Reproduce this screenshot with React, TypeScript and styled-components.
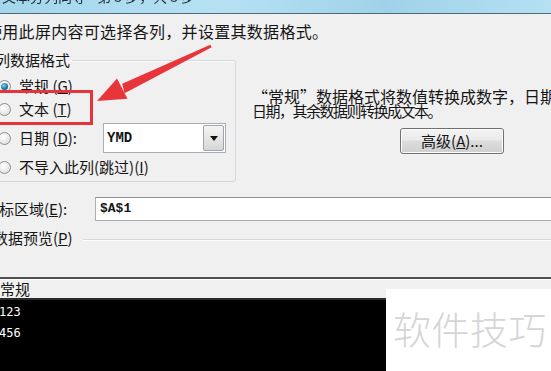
import React from 'react';
import styled, { createGlobalStyle } from 'styled-components';

const GlobalStyle = createGlobalStyle`
  html, body {
    margin: 0;
    padding: 0;
    background: #f0f0f0;
    overflow: hidden;
  }
`;

const App: React.FC = () => {
  const options = [
    { label: '常规', key: 'G', checked: true, height: 20, gap: 0 },
    { label: '文本', key: 'T', checked: false, height: 20, gap: 3 },
  ];

  return (
    <Page>
      <GlobalStyle />
      <TitleBar>
        <TitleText>文本分列向导 - 第 3 步，共 3 步</TitleText>
      </TitleBar>
      <Body>
        <Intro>使用此屏内容可选择各列，并设置其数据格式。</Intro>
        <Middle>
          <GroupBox>
            <Legend>列数据格式</Legend>
            {options.map((item) => (
              <OptionRow key={item.key} $height={item.height} $gap={item.gap}>
                <Radio $checked={item.checked} />
                <OptionLabel>
                  {item.label} (<Key>{item.key}</Key>)
                </OptionLabel>
              </OptionRow>
            ))}
            <OptionRow $height={30} $gap={4}>
              <Radio $checked={false} />
              <OptionLabel>
                日期 (<Key>D</Key>):
              </OptionLabel>
              <Combo>
                <ComboText>YMD</ComboText>
                <ComboButton>
                  <Caret />
                </ComboButton>
              </Combo>
            </OptionRow>
            <OptionRow $height={20} $gap={4}>
              <Radio $checked={false} />
              <OptionLabel>
                不导入此列(跳过)(<Key>I</Key>)
              </OptionLabel>
            </OptionRow>
          </GroupBox>
          <Description>
            <DescLine>“常规”数据格式将数值转换成数字，日期值会转换成</DescLine>
            <DescLineTight>日期，其余数据则转换成文本。</DescLineTight>
            <WinButton>
              高级(<Key>A</Key>)...
            </WinButton>
          </Description>
        </Middle>
        <TargetRow>
          <TargetLabel>
            目标区域(<Key>E</Key>):
          </TargetLabel>
          <TargetInput>$A$1</TargetInput>
        </TargetRow>
        <PreviewLabelRow>
          <PreviewLabel>
            数据预览(<Key>P</Key>)
          </PreviewLabel>
          <EtchedLine />
        </PreviewLabelRow>
        <PreviewPane>
          <PreviewHeader>
            <HeaderCell>常规</HeaderCell>
          </PreviewHeader>
          <PreviewGrid>
            <GridRow>123</GridRow>
            <GridRow>456</GridRow>
          </PreviewGrid>
        </PreviewPane>
      </Body>

      <Highlight />
      <Arrow width="551" height="371" viewBox="0 0 551 371">
        <polygon points="122.2,83.8 210.3,44.8 211.7,47.2 124.6,93.2" fill="#e8353a" />
        <polygon points="97,101 117,78.5 127.5,98.8" fill="#e8353a" />
      </Arrow>
      <Watermark>软件技巧</Watermark>
    </Page>
  );
};

const Page = styled.div`
  position: relative;
  width: 551px;
  height: 371px;
  overflow: hidden;
  background: #f0f0f0;
  font-family: "Noto Sans CJK SC", "Noto Sans", sans-serif;
  color: #151515;
`;

const TitleBar = styled.div`
  height: 13px;
  display: flex;
  align-items: flex-end;
  overflow: hidden;
  background: linear-gradient(to right, #a3d6ec 0%, #b6e1f3 40%, #9fd2e9 70%, #b5e0f2 100%);
  border-bottom: 1px solid #50697a;
`;

const TitleText = styled.div`
  margin: 0 0 10px 2px;
  font-size: 14px;
  line-height: 14px;
  white-space: nowrap;
  color: #1d2a33;
  filter: blur(0.7px);
`;

const Body = styled.div`
  margin-left: -16px;
  width: 620px;
  display: flex;
  flex-direction: column;
`;

const Intro = styled.div`
  margin-top: 8px;
  padding-left: 2px;
  height: 18px;
  font-size: 16px;
  line-height: 18px;
  letter-spacing: 0.3px;
  white-space: nowrap;
`;

const Middle = styled.div`
  display: flex;
  align-items: flex-start;
  margin-top: 11px;
`;

const GroupBox = styled.fieldset`
  flex: none;
  box-sizing: border-box;
  width: 244px;
  min-width: 0;
  margin: 0 0 0 8px;
  padding: 7px 9px 4px 0;
  border: 1px solid #d5d9dd;
  border-radius: 3px;
  box-shadow: inset 1px 1px 0 #fff;
`;

const Legend = styled.legend`
  margin-left: 2px;
  padding: 0 2px 0 0;
  font-size: 15px;
  line-height: 18px;
`;

const OptionRow = styled.div<{ $height: number; $gap: number }>`
  display: flex;
  align-items: center;
  gap: 8px;
  height: ${({ $height }) => $height}px;
  margin-top: ${({ $gap }) => $gap}px;
`;

const Radio = styled.span<{ $checked: boolean }>`
  flex: none;
  box-sizing: border-box;
  width: 13px;
  height: 13px;
  margin-left: 5px;
  border-radius: 50%;
  border: 1px solid #8c8f92;
  background: radial-gradient(circle at 40% 35%, #ffffff 0%, #e9e9e9 55%, #d2d4d6 100%);
  display: flex;
  align-items: center;
  justify-content: center;

  &::after {
    content: '';
    width: 7px;
    height: 7px;
    border-radius: 50%;
    background: ${({ $checked }) =>
      $checked ? 'radial-gradient(circle at 40% 35%, #7fd4f7 0%, #1f78a8 55%, #123f5c 100%)' : 'transparent'};
  }
`;

const OptionLabel = styled.span`
  font-size: 15px;
  line-height: 18px;
  white-space: nowrap;
`;

const Key = styled.span`
  text-decoration: underline;
`;

const Combo = styled.div`
  flex: none;
  box-sizing: border-box;
  margin-left: auto;
  width: 123px;
  height: 30px;
  display: flex;
  background: #fff;
  border: 1px solid #a9aeb4;
`;

const ComboText = styled.div`
  flex: 1;
  padding-left: 3px;
  font-family: "Liberation Mono", monospace;
  font-weight: bold;
  font-size: 14px;
  line-height: 28px;
`;

const ComboButton = styled.div`
  box-sizing: border-box;
  width: 21px;
  margin: 1px;
  border: 1px solid #9ea4ab;
  border-radius: 2px;
  background: linear-gradient(#f4f4f4, #e6e6e6 50%, #d6d6d6);
  display: flex;
  align-items: center;
  justify-content: center;
`;

const Caret = styled.span`
  width: 0;
  height: 0;
  border-left: 4px solid transparent;
  border-right: 4px solid transparent;
  border-top: 5px solid #111;
`;

const Description = styled.div`
  flex: none;
  display: flex;
  flex-direction: column;
  margin-left: 16px;
  padding-top: 39px;
`;

const DescLine = styled.div`
  font-size: 16px;
  line-height: 13px;
  white-space: nowrap;
`;

const DescLineTight = styled(DescLine)`
  margin-top: 1px;
  font-size: 15px;
  letter-spacing: -1.5px;
`;

const WinButton = styled.div`
  box-sizing: border-box;
  margin: 11px 0 0 148px;
  width: 104px;
  height: 26px;
  border: 1px solid #707070;
  border-radius: 3px;
  background: linear-gradient(#f3f3f3 0%, #ebebeb 45%, #dddddd 50%, #cfcfcf 100%);
  box-shadow: inset 0 0 0 1px #fcfcfc;
  display: flex;
  align-items: center;
  justify-content: center;
  font-size: 15px;
  line-height: 18px;
`;

const TargetRow = styled.div`
  display: flex;
  align-items: center;
  height: 24px;
  margin-top: 15px;
`;

const TargetLabel = styled.div`
  width: 111px;
  font-size: 15px;
  line-height: 18px;
  white-space: nowrap;
`;

const TargetInput = styled.div`
  box-sizing: border-box;
  flex: 1;
  height: 24px;
  padding-left: 4px;
  background: #fff;
  border: 1px solid #abadb3;
  border-top-color: #8d9095;
  font-family: "Liberation Mono", monospace;
  font-weight: bold;
  font-size: 13px;
  line-height: 22px;
`;

const PreviewLabelRow = styled.div`
  display: flex;
  align-items: center;
  gap: 10px;
  height: 18px;
  margin-top: 8px;
  padding-left: 9px;
`;

const PreviewLabel = styled.div`
  font-size: 15px;
  line-height: 18px;
  white-space: nowrap;
`;

const EtchedLine = styled.div`
  flex: 1;
  margin-top: 3px;
  border-top: 1px solid #d5d9dd;
  border-bottom: 1px solid #fff;
`;

const PreviewPane = styled.div`
  margin-top: 30px;
  border-top: 2px solid #505050;
`;

const PreviewHeader = styled.div`
  height: 18px;
  padding-left: 16px;
  background: #f0f0f0;
  border-top: 1px solid #fff;
  border-bottom: 2px solid #2a2a2a;
`;

const HeaderCell = styled.div`
  font-size: 15px;
  line-height: 18px;
`;

const PreviewGrid = styled.div`
  height: 80px;
  padding: 2px 0 0 15px;
  background: #000;
  color: #fff;
  font-family: "DejaVu Sans Mono", monospace;
  font-size: 12px;
`;

const GridRow = styled.div`
  height: 21px;
  line-height: 21px;
`;

const Highlight = styled.div`
  position: absolute;
  left: -6px;
  top: 90px;
  width: 99px;
  height: 35px;
  box-sizing: border-box;
  border: 3px solid #e8333a;
`;

const Arrow = styled.svg`
  position: absolute;
  left: 0;
  top: 0;
  pointer-events: none;
`;

const Watermark = styled.div`
  position: absolute;
  right: 0;
  top: 289px;
  width: 165px;
  height: 82px;
  box-sizing: border-box;
  padding: 15px 0 0 7px;
  background: #fff;
  color: #d5d5d5;
  font-size: 38px;
  font-weight: 300;
  line-height: 48px;
  letter-spacing: 0.5px;
  white-space: nowrap;
`;

export default App;
